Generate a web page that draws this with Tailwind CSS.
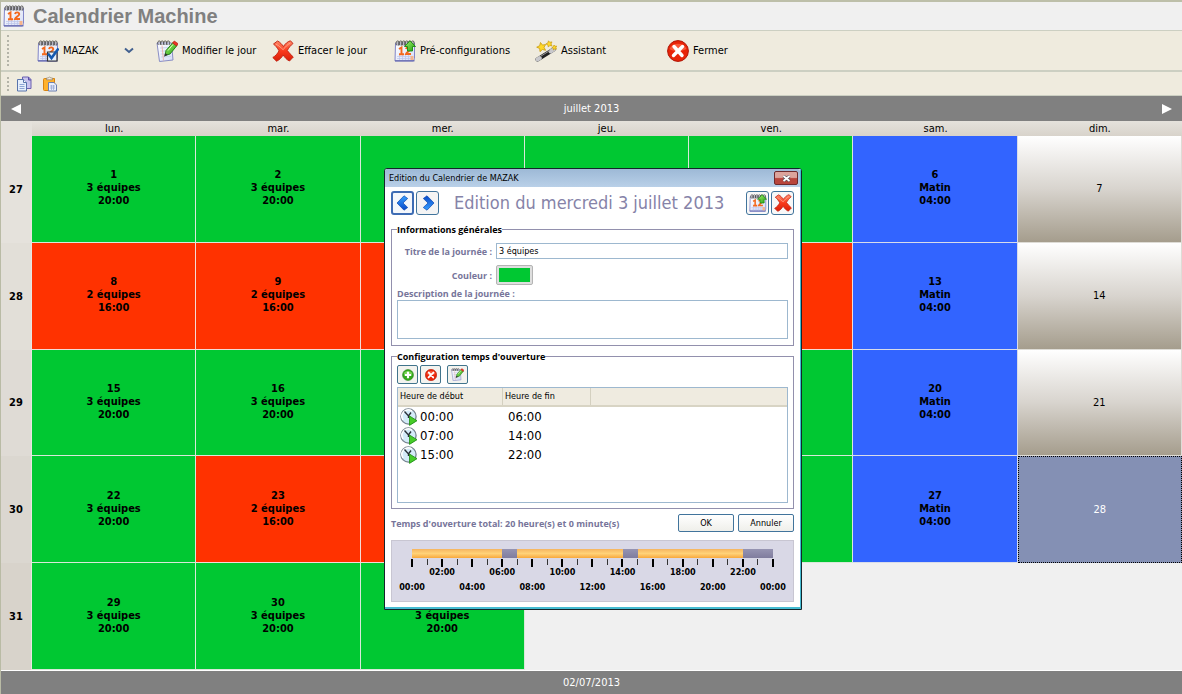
<!DOCTYPE html>
<html lang="fr">
<head>
<meta charset="utf-8">
<title>Calendrier Machine</title>
<script src="https://cdn.jsdelivr.net/npm/@tailwindcss/browser@4"></script>
</head>
<body class="relative flex min-h-screen flex-col border-l border-[#b9bba5] bg-[#f0f0f0] font-['DejaVu_Sans_Condensed','DejaVu_Sans',sans-serif] text-[11px] leading-[13px] text-black">

<svg class="absolute size-0" aria-hidden="true">
  <defs>
    <linearGradient id="paper" x1="0" y1="0" x2="1" y2="1"><stop offset="0" stop-color="#fff"/><stop offset="1" stop-color="#d4dcf6"/></linearGradient>
    <linearGradient id="red" x1="0" y1="0" x2="0" y2="1"><stop offset="0" stop-color="#ff8a6a"/><stop offset=".5" stop-color="#f93a1c"/><stop offset="1" stop-color="#d81e08"/></linearGradient>
    <linearGradient id="green" x1="0" y1="0" x2="1" y2="1"><stop offset="0" stop-color="#a4f070"/><stop offset="1" stop-color="#22a010"/></linearGradient>
    <linearGradient id="blue" x1="0" y1="0" x2="0" y2="1"><stop offset="0" stop-color="#38a0ff"/><stop offset="1" stop-color="#0848c8"/></linearGradient>
    <symbol id="i-rings" viewBox="0 0 22 22">
      <path d="M2 3.5h18" stroke="#b8b8c4" stroke-width="3"/>
      <path d="M3 5.500C.8 3 2.500 .8 4 1s1.500 2.500 .5 4.500M6 5.500C3.800 3 5.500 .8 7 1s1.500 2.500 .5 4.500M9 5.500C6.800 3 8.500 .8 10 1s1.500 2.500 .5 4.500M12 5.500C9.800 3 11.500 .8 13 1s1.500 2.500 .5 4.500M15 5.500C12.800 3 14.500 .8 16 1s1.500 2.500 .5 4.500M18 5.500C15.800 3 17.500 .8 19 1s1.500 2.500 .5 4.500" fill="none" stroke="#444" stroke-width=".9"/>
    </symbol>
    <symbol id="i-cal" viewBox="0 0 22 22">
      <path d="M1.500 3.500h19v15l-1 2.500h-18.500z" fill="url(#paper)" stroke="#8286c8"/>
      <path d="M1 20.800h19.500" stroke="#6468b0" stroke-width="1.200"/>
      <path d="M3 16.500h16M3 18.500h16M5.500 15v5M8.500 15v5M11.500 15v5M14.500 15v5" stroke="#bcc4ea" stroke-width=".7"/>
      <path d="M16.500 16h3v4h-3z" fill="#f6b48c"/>
      <path d="M5 9l2.500-1.500V14M5 14.200h5M12 9c.5-2.300 4.500-2 4.200.3-.2 1.700-3.500 2.700-4.200 4.700h5" fill="none" stroke="#f4691c" stroke-width="1.900"/>
      <use href="#i-rings"/>
    </symbol>
    <symbol id="i-calcheck" viewBox="0 0 22 22">
      <use href="#i-cal"/>
      <path d="M10.500 12h9.500v9h-9.500z" fill="#e6eefc" stroke="#333" stroke-width="1.200"/>
      <path d="M11 13.500l3.500 4.500 7-9.500" fill="none" stroke="#1458b0" stroke-width="2.600"/>
    </symbol>
    <symbol id="i-calup" viewBox="0 0 22 22">
      <use href="#i-cal"/>
      <path d="M16 .8l5.500 5.700h-3v4.500h-5V6.500h-3z" fill="url(#green)" stroke="#168a0c" stroke-width=".9"/>
    </symbol>
    <symbol id="i-edit" viewBox="0 0 22 22">
      <path d="M1 3h14.500l1.500 17-13.500 1.500z" fill="url(#paper)" stroke="#8a8ec4"/>
      <path d="M4 8l9-.5M4.300 11h9M4.600 14h10M5 17l10-.5" stroke="#c0cdec" stroke-width=".8"/>
      <path d="M6 5.500l1.500 15" stroke="#f0a090" stroke-width=".7"/>
      <path d="M2.500 5C.8 3 2 .8 3.500 1s1.500 2 .5 4M5.500 5C3.800 3 5 .8 6.500 1s1.500 2 .5 4M8.500 5C6.800 3 8 .8 9.500 1s1.500 2 .5 4M11.500 5C9.800 3 11 .8 12.500 1s1.500 2 .5 4" fill="none" stroke="#444" stroke-width=".9"/>
      <path d="M9 15.500l1-5L17 2.500l4 3-7 8.500z" fill="url(#green)" stroke="#1c7a10" stroke-width=".9"/>
      <path d="M16.500 3l1.800-2 3.700 2.700L20.500 6z" fill="#ee3428" stroke="#b01810" stroke-width=".7"/>
      <path d="M8 16.800l1.200-3.600 2.800 1.600z" fill="#333"/>
      <path d="M12 10.500l5-6" stroke="#dcffb8" stroke-width="1"/>
    </symbol>
    <symbol id="i-cross" viewBox="0 0 22 22">
      <path d="M1.500 4L5.500 1c2.500 1 4.500 3.500 6 5.500C13 4 15.500 1.500 18.500.8L21 3.500c-2.500 2-4.500 4.500-5.700 7 1.700 2.300 3.700 4.500 6 6.500L17.500 21c-2.500-1-4.800-3.500-6.300-6-1.700 2.500-3.500 5-6.700 6.200L.8 17.500c2.700-1.500 4.900-4 6.200-6.700C5.500 8 3.500 5.500 1.500 4z" fill="url(#red)" stroke="#c02010" stroke-width=".9"/>
      <path d="M4 4.200c3 1.300 5 3.800 7.200 5.500 2-2.700 4.300-5.200 7-6.500" fill="none" stroke="#ffb8a0" stroke-width="1" opacity=".7"/>
    </symbol>
    <symbol id="i-wand" viewBox="0 0 22 22">
      <path d="M2.500 19.500L18.500 9.500" stroke="#222" stroke-width="4.200" stroke-linecap="round"/>
      <path d="M2.500 19.500l2.300-1.500M15.500 11.500l3-2" stroke="#c8c8cc" stroke-width="4" stroke-linecap="round"/>
      <path d="M5 16.700l10-6.300" stroke="#999" stroke-width="1"/>
      <path d="M5.500 2.500l2 2.600 3.200-.6-1.700 2.800 1.600 3-3.200-.8L5 11.700l-.3-3.200-3-1.300 3-1.500z" fill="#ffd828" stroke="#c89a10" stroke-width=".8"/>
      <path d="M13.500 .8l1.300 1.500 2.200-.4-1 2 1 2-2.200-.4-1.500 1.600-.4-2.200-2-1 2-1zM19 5l1 1.300 1.700-.2-.8 1.500.6 1.600-1.700-.4-1.300 1.200-.2-1.700-1.500-.9 1.600-.7z" fill="#ffd828" stroke="#c89a10" stroke-width=".7"/>
    </symbol>
    <symbol id="i-stop" viewBox="0 0 22 22">
      <circle cx="11" cy="11" r="10.400" fill="#e82408" stroke="#b01404"/>
      <path d="M2.500 9a9 8 0 0 1 17 0c-4 2.500-13 3-17 0z" fill="#ff6a48" opacity=".75"/>
      <path d="M7 6.500l8 9M15.500 6.500l-9 9" stroke="#fff" stroke-width="3.400" stroke-linecap="round"/>
    </symbol>
    <symbol id="i-plus" viewBox="0 0 22 22">
      <circle cx="11" cy="11" r="10" fill="#35a81c" stroke="#1c7c0c"/>
      <path d="M3 9a8.500 8 0 0 1 16 0c-4 2-12 2-16 0z" fill="#8ade60" opacity=".8"/>
      <path d="M11 5v12M5 11h12" stroke="#fff" stroke-width="4"/>
    </symbol>
    <symbol id="i-copy" viewBox="0 0 16 16">
      <path d="M6.500 1h6l2.500 2.500V12.500H6.500z" fill="#c9c4ee" stroke="#6a60b0"/>
      <path d="M12.500 1v3H15" fill="#8c80cc" stroke="#5c50a8"/>
      <path d="M1.500 3.500h6l3 3v8.500h-9z" fill="#e6effc" stroke="#5874ac"/>
      <path d="M7.500 3.500v3h3" fill="#fff" stroke="#5874ac"/>
      <path d="M3.500 8.500h5M3.500 10.500h5M3.500 12.500h5" stroke="#8ea6d4"/>
    </symbol>
    <symbol id="i-paste" viewBox="0 0 16 16">
      <path d="M2.500 2.500h10v12h-10q-1 0-1-1v-10q0-1 1-1z" fill="#ffb22c" stroke="#d88410"/>
      <path d="M4.500 3.800V2h1.500q1.500-1.800 3 0h1.500v1.800z" fill="#f0f0f0" stroke="#98886c" stroke-width=".8"/>
      <path d="M6.500 6.500h5.500l2.500 2.500v6h-8z" fill="#eaf0fc" stroke="#6c80b0"/>
      <path d="M8 10h5M8 12h5M9.500 9v5M11.500 9v5" stroke="#92a4d0" stroke-width=".7"/>
    </symbol>
    <symbol id="i-clock" viewBox="0 0 18 18">
      <circle cx="8.500" cy="8.500" r="7.600" fill="#d4ebf9" stroke="#75838f" stroke-width="1.300"/>
      <path d="M3 12a6.500 6.500 0 0 1 9-9" fill="none" stroke="#fff" stroke-width="1.500"/>
      <path d="M4.500 3.500L8.500 8l2.500-3.500M8.500 8v2" fill="none" stroke="#283038" stroke-width="1.400"/>
      <path d="M9.500 8l7.500 4.700-7.500 4.700z" fill="#46cc28" stroke="#1c8a14" stroke-width=".8"/>
    </symbol>
    <symbol id="i-left" viewBox="0 0 16 16">
      <path d="M9 .8l3.700 2.700L8 8l4.700 4.500L9 15.200 2 8z" fill="url(#blue)" stroke="#0c48b0" stroke-width=".7"/>
    </symbol>
  </defs>
</svg>

<header class="flex h-[31px] items-center gap-2 border-t-2 border-b border-t-[#bdbfa9] border-b-[#cccfc2] px-[2px]">
  <svg class="size-[22px]"><use href="#i-cal"/></svg>
  <h1 class="font-['Liberation_Sans',sans-serif] text-[20px] leading-6 font-bold text-[#808080]">Calendrier Machine</h1>
</header>

<nav aria-label="Actions" class="flex h-[41px] items-center border-b-2 border-[#cccfc2] bg-[#efebde] pl-[6px]">
  <span class="mr-[28px] h-[31px] border-l-2 border-dotted border-[#b4b4a8]"></span>
  <button class="flex items-center gap-1"><svg class="size-[22px]"><use href="#i-calcheck"/></svg><span class="w-[57px] text-left">MAZAK</span><svg class="h-[7px] w-[10px]" viewBox="0 0 10 7"><path d="M1 1.500l4 3.500 4-3.500" fill="none" stroke="#41608f" stroke-width="2"/></svg></button>
  <button class="ml-[22px] flex w-[116px] items-center gap-1 whitespace-nowrap"><svg class="size-[22px] shrink-0"><use href="#i-edit"/></svg>Modifier le jour</button>
  <button class="flex w-[122px] items-center gap-1 whitespace-nowrap"><svg class="size-[22px] shrink-0"><use href="#i-cross"/></svg>Effacer le jour</button>
  <button class="flex w-[141px] items-center gap-1 whitespace-nowrap"><svg class="size-[22px] shrink-0"><use href="#i-calup"/></svg>Pré-configurations</button>
  <button class="flex w-[132px] items-center gap-1 whitespace-nowrap"><svg class="size-[22px] shrink-0"><use href="#i-wand"/></svg>Assistant</button>
  <button class="flex items-center gap-1 whitespace-nowrap"><svg class="size-[22px] shrink-0"><use href="#i-stop"/></svg>Fermer</button>
</nav>

<nav aria-label="Presse-papiers" class="flex h-6 items-center border-b border-[#cccfc2] bg-[#efebde] pl-[6px]">
  <span class="mr-[7px] h-[14px] border-l-2 border-dotted border-[#b4b4a8]"></span>
  <button aria-label="Copier" class="mr-[10px]"><svg class="size-4"><use href="#i-copy"/></svg></button>
  <button aria-label="Coller"><svg class="size-4"><use href="#i-paste"/></svg></button>
</nav>

<div class="flex h-[25px] items-center justify-between bg-[#808080] px-[9px] text-white">
  <button aria-label="Mois précédent"><svg class="h-[10px] w-3" viewBox="0 0 12 10"><path d="M1 5l10-5v10z" fill="#fff"/></svg></button>
  <span>juillet 2013</span>
  <button aria-label="Mois suivant"><svg class="h-[10px] w-3" viewBox="0 0 12 10"><path d="M11 5L1 0v10z" fill="#fff"/></svg></button>
</div>

<main class="flex flex-1 flex-col border-b border-white">
  <table class="w-full flex-1 table-fixed border-separate border-spacing-0 text-center">
    <colgroup><col class="w-[31px]"><col><col><col><col><col><col><col></colgroup>
    <thead>
      <tr class="h-[15px] bg-linear-to-b from-[#e5e2dc] to-[#d8d3cb]">
        <td class="bg-[#e5e2dc]"></td>
        <th class="font-normal">lun.</th><th class="font-normal">mar.</th><th class="font-normal">mer.</th><th class="font-normal">jeu.</th><th class="font-normal">ven.</th><th class="font-normal">sam.</th><th class="font-normal">dim.</th>
      </tr>
    </thead>
    <tbody id="weeks" class="font-bold"></tbody>
  </table>
</main>

<footer class="flex h-[23px] items-center justify-center bg-[#808080] text-white">02/07/2013</footer>

<section role="dialog" aria-labelledby="dlg-title" class="absolute top-[168px] left-[383px] w-[418px] rounded-t-[3px] border border-[#15252b] bg-white">
  <div class="border-r border-b-2 border-[#45bcd2]">
    <div class="flex h-[18px] items-center justify-between rounded-t-[2px] bg-linear-to-b from-[#9db9d6] to-[#b9d0e8] pr-[2px] pl-1">
      <h2 id="dlg-title" class="text-[9px]">Edition du Calendrier de MAZAK</h2>
      <button aria-label="Fermer" class="flex h-[14px] w-6 items-center justify-center rounded-[2px] border border-[#6e2a2c] bg-linear-to-b from-[#dca49c] from-45% to-[#b8453c] to-55%"><svg class="h-[7px] w-[9px]" viewBox="0 0 9 7"><path d="M1.500 1l6 5M7.500 1l-6 5" stroke="#4d4d58" stroke-width="3"/><path d="M1.500 1l6 5M7.500 1l-6 5" stroke="#fff" stroke-width="1.800"/></svg></button>
    </div>

    <div class="px-[6px] pt-1 pb-[5px]">
      <div class="flex h-6 items-center gap-[2px]">
        <button aria-label="Jour précédent" class="flex h-6 w-[23px] shrink-0 items-center justify-center rounded-[3px] border-2 border-[#3e6cb4] bg-[#f4f7fb]"><svg class="size-4"><use href="#i-left"/></svg></button>
        <button aria-label="Jour suivant" class="flex h-6 w-[23px] shrink-0 items-center justify-center rounded-[3px] border border-[#41749c] bg-[#f4f4f4]"><svg class="size-4 rotate-180"><use href="#i-left"/></svg></button>
        <h3 class="flex-1 pl-[13px] text-[18px] leading-6 whitespace-nowrap text-[#8683a8]">Edition du mercredi 3 juillet 2013</h3>
        <button aria-label="Pré-configurations" class="flex h-6 w-[23px] shrink-0 items-center justify-center rounded-[3px] border border-[#41749c] bg-[#f8f8f8]"><svg class="size-[18px]"><use href="#i-calup"/></svg></button>
        <button aria-label="Effacer le jour" class="flex h-6 w-[23px] shrink-0 items-center justify-center rounded-[3px] border border-[#41749c] bg-[#f8f8f8]"><svg class="size-[18px]"><use href="#i-cross"/></svg></button>
      </div>

      <fieldset class="mt-2 border border-[#9290ad] px-[5px] pb-[6px]">
        <legend class="font-['Open_Sans',sans-serif] text-[9px] font-bold">Informations générales</legend>
        <div class="grid grid-cols-[95px_1fr] items-center gap-x-1 gap-y-[6px] pt-[7px] text-[9px]">
          <label for="titre" class="text-right font-['Open_Sans',sans-serif] font-bold whitespace-nowrap text-[#77759a]">Titre de la journée :</label>
          <input id="titre" value="3 équipes" class="h-4 w-full border border-[#9db8cf] bg-white px-[2px]">
          <label for="couleur" class="text-right font-['Open_Sans',sans-serif] font-bold text-[#77759a]">Couleur :</label>
          <button id="couleur" aria-label="Couleur" class="flex h-5 w-[37px] rounded-[2px] border border-[#b4b4b4] bg-[#dedede] p-[2px]"><span class="h-full w-full bg-[#00c832]"></span></button>
        </div>
        <label for="desc" class="mt-[3px] block font-['Open_Sans',sans-serif] text-[9px] leading-3 font-bold text-[#77759a]">Description de la journée :</label>
        <textarea id="desc" class="block h-[39px] w-full resize-none border border-[#9db8cf] bg-white p-[2px] text-[9px]"></textarea>
      </fieldset>

      <fieldset class="mt-1 border border-[#9290ad] px-[5px] pb-[5px]">
        <legend class="font-['Open_Sans',sans-serif] text-[9px] font-bold">Configuration temps d'ouverture</legend>
        <div class="flex gap-[2px] pt-[2px]">
          <button aria-label="Ajouter" class="flex h-[19px] w-[21px] items-center justify-center rounded-[2px] border border-[#41748c] bg-[#f3f3ef]"><svg class="size-3"><use href="#i-plus"/></svg></button>
          <button aria-label="Supprimer" class="flex h-[19px] w-[21px] items-center justify-center rounded-[2px] border border-[#41748c] bg-[#f3f3ef]"><svg class="size-3"><use href="#i-stop"/></svg></button>
          <button aria-label="Modifier" class="ml-1 flex h-[19px] w-[21px] items-center justify-center rounded-[2px] border border-[#41748c] bg-[#f3f3ef]"><svg class="size-[13px]"><use href="#i-edit"/></svg></button>
        </div>
        <div class="mt-[3px] h-[116px] border border-[#9db8cf]">
          <table class="w-full table-fixed border-separate border-spacing-0 text-left">
            <colgroup><col class="w-[104px]"><col class="w-[88px]"><col></colgroup>
            <thead class="text-[9px]">
              <tr class="h-[19px] bg-[#efebe0]">
                <th class="border-b-2 border-[#d8d4c4] pl-[2px] font-normal">Heure de début</th><th class="border-b-2 border-[#d8d4c4] pl-[3px] font-normal shadow-[inset_1px_0_#d4d0c0]">Heure de fin</th><td class="border-b-2 border-[#d8d4c4] shadow-[inset_1px_0_#d4d0c0]"></td>
              </tr>
            </thead>
            <tbody class="text-[13px] leading-[19px]">
              <tr><td><span class="flex items-center gap-[2px] pl-[2px]"><svg class="size-[18px]"><use href="#i-clock"/></svg>00:00</span></td><td class="pl-[6px]">06:00</td></tr>
              <tr><td><span class="flex items-center gap-[2px] pl-[2px]"><svg class="size-[18px]"><use href="#i-clock"/></svg>07:00</span></td><td class="pl-[6px]">14:00</td></tr>
              <tr><td><span class="flex items-center gap-[2px] pl-[2px]"><svg class="size-[18px]"><use href="#i-clock"/></svg>15:00</span></td><td class="pl-[6px]">22:00</td></tr>
            </tbody>
          </table>
        </div>
      </fieldset>

      <div class="mt-[5px] flex h-[18px] items-center gap-1 text-[9px]">
        <p class="flex-1 font-['Open_Sans',sans-serif] font-bold text-[#77759a]">Temps d'ouverture total: 20 heure(s) et 0 minute(s)</p>
        <button class="h-[18px] w-[56px] rounded-[2px] border border-[#41749c] bg-linear-to-b from-white to-[#efefea]">OK</button>
        <button class="h-[18px] w-[56px] rounded-[2px] border border-[#41749c] bg-linear-to-b from-white to-[#efefea]">Annuler</button>
      </div>

      <div class="mt-2 h-[62px] border border-[#c8c6d2] bg-[#d9d8e6] px-[20px] pt-2 text-center text-[9px] font-bold">
        <div class="flex h-[9px] w-full">
          <span class="w-1/4 bg-linear-to-b from-[#f5b560] via-[#ffd278] to-[#f8a838]"></span>
          <span class="w-1/24 bg-linear-to-b from-[#9694b2] to-[#807d9e]"></span>
          <span class="w-7/24 bg-linear-to-b from-[#f5b560] via-[#ffd278] to-[#f8a838]"></span>
          <span class="w-1/24 bg-linear-to-b from-[#9694b2] to-[#807d9e]"></span>
          <span class="w-7/24 bg-linear-to-b from-[#f5b560] via-[#ffd278] to-[#f8a838]"></span>
          <span class="w-1/12 bg-linear-to-b from-[#9694b2] to-[#807d9e]"></span>
        </div>
        <div id="ticks" class="flex h-[9px] justify-between pt-px"></div>
        <div class="flex leading-[11px]"><span class="flex-1">02:00</span><span class="flex-1">06:00</span><span class="flex-1">10:00</span><span class="flex-1">14:00</span><span class="flex-1">18:00</span><span class="flex-1">22:00</span></div>
        <div class="-mx-[30px] flex pt-1 leading-[11px]"><span class="flex-1">00:00</span><span class="flex-1">04:00</span><span class="flex-1">08:00</span><span class="flex-1">12:00</span><span class="flex-1">16:00</span><span class="flex-1">20:00</span><span class="flex-1">00:00</span></div>
      </div>
    </div>
  </div>
</section>

<script>
const kinds = {
  g: { cls: 'bg-[#00c832] border-r border-b border-[#d9e8d9] pb-[2px]', text: ['3 équipes', '20:00'] },
  r: { cls: 'bg-[#ff3200] border-r border-b border-[#f2dcd6] pb-[2px]', text: ['2 équipes', '16:00'] },
  b: { cls: 'bg-[#3264ff] border-r border-b border-[#d8dcea] pb-[2px]', text: ['Matin', '04:00'] },
  w: { cls: 'bg-linear-to-b from-white via-[#d8d4ce] to-[#a59d8d] border-r border-b border-[#dedcd6] font-normal', text: [] },
  s: { cls: 'bg-[#8490b4] border border-dotted border-black font-normal text-white', text: [] },
  e: { cls: 'bg-[#f0f0f0]', text: [] }
};
const shade = ['bg-[#e5e2dc]', 'bg-[#e2dfd8]', 'bg-[#dfdbd5]', 'bg-[#dbd7d0]', 'bg-[#d8d3cb]'];
const weeks = ['gggggbw', 'rrrrrbw', 'gggggbw', 'grrggbs', 'gggeeee'];
let day = 1;
document.getElementById('weeks').innerHTML = weeks.map((w, i) =>
  `<tr class="h-[106px]"><th class="border-r border-[#e8e6e0] ${shade[i]}">${27 + i}</th>` +
  [...w].map(k => k === 'e' ? `<td class="${kinds.e.cls}"></td>` :
    `<td class="${kinds[k].cls}">${[day++, ...kinds[k].text].join('<br>')}</td>`).join('') + '</tr>').join('');
document.getElementById('ticks').innerHTML = Array.from({ length: 25 }, (_, h) =>
  h % 2 ? '<span class="-mx-px h-[6px] w-px bg-[#333]"></span>' : '<span class="-mx-px h-2 w-[2px] bg-black"></span>').join('');
</script>
</body>
</html>
